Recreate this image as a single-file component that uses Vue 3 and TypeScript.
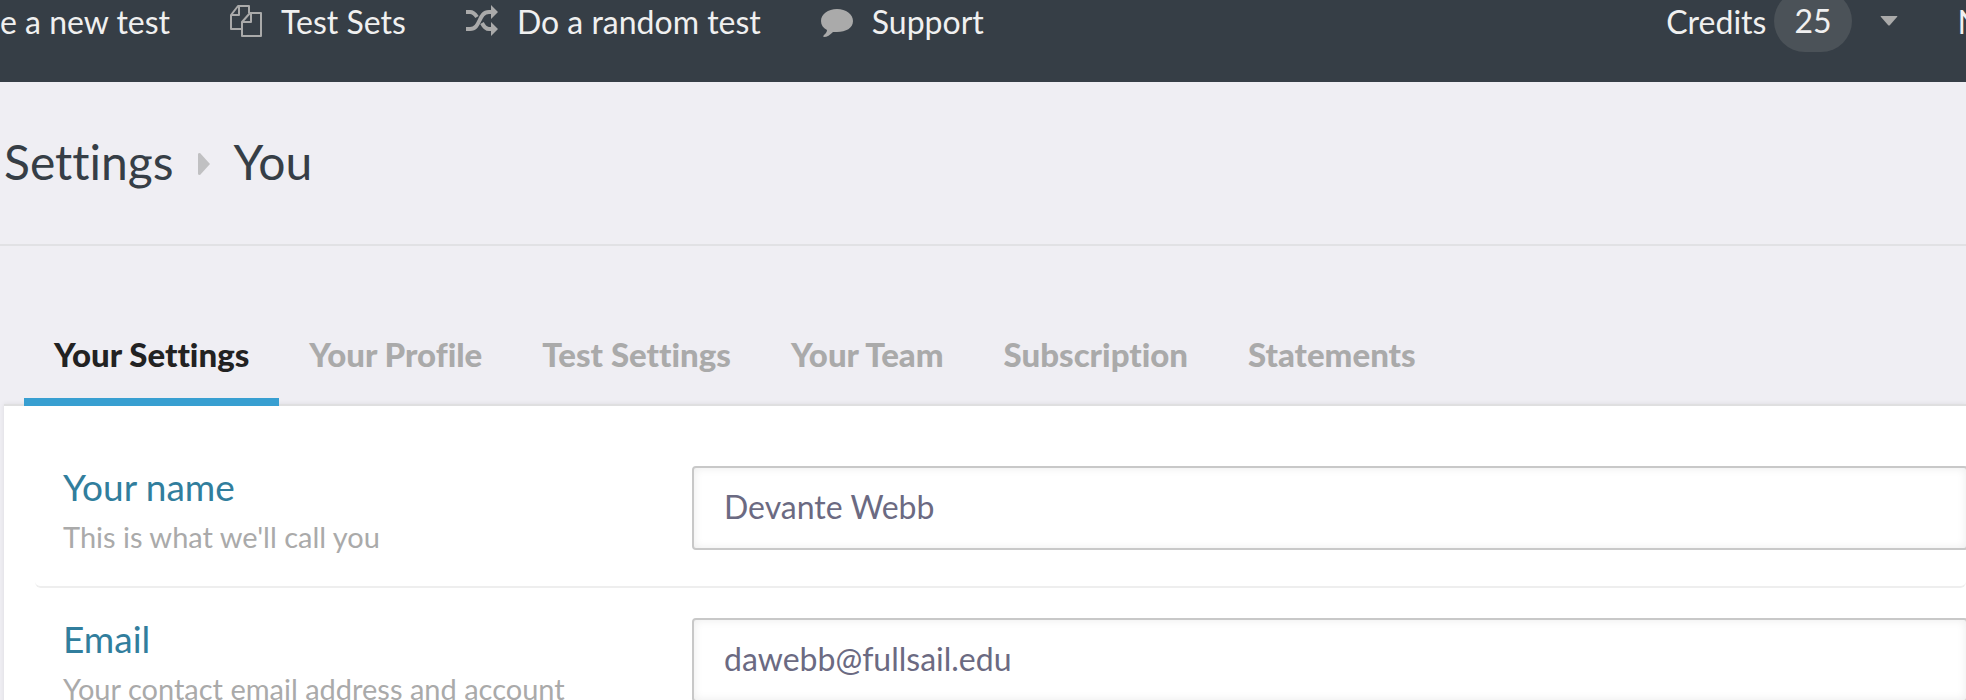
<script setup lang="ts">
import { ref } from 'vue'

interface Field {
  id: string
  type: string
  label: string
  hint: string
}

const tabs: string[] = [
  'Your Settings',
  'Your Profile',
  'Test Settings',
  'Your Team',
  'Subscription',
  'Statements',
]
const activeTab = ref(tabs[0])

const fields: Field[] = [
  { id: 'name', type: 'text', label: 'Your name', hint: "This is what we'll call you" },
  { id: 'email', type: 'email', label: 'Email', hint: 'Your contact email address and account' },
]
const values = ref<Record<string, string>>({
  name: 'Devante Webb',
  email: 'dawebb@fullsail.edu',
})
</script>

<template>
  <div class="page">
    <header class="topbar">
      <nav class="menu">
        <a href="#new">e a new test</a>
        <a href="#sets">
          <svg class="icon" viewBox="0 0 34 34" aria-hidden="true">
            <g fill="none" stroke="#aaa" stroke-width="2" stroke-linejoin="round">
              <path d="M13 25H2V11L9 2H20V9M10 2V11H2" />
              <path d="M21 9H32V32H13V18ZM22 9V18H13" />
            </g>
          </svg>
          Test Sets
        </a>
        <a href="#random">
          <svg class="icon" viewBox="0 0 34 34" aria-hidden="true">
            <g fill="none" stroke="#aaa" stroke-width="4">
              <path d="M1 25H5C16 25 13 8 24 8H27" />
              <path d="M1 8H5C8 8 10 10 12 13M17 19C19 23 21 25 24 25H27" />
            </g>
            <path fill="#aaa" d="M26 1L33 8L26 15ZM26 18L33 25L26 32Z" />
          </svg>
          Do a random test
        </a>
        <a href="#support">
          <svg class="icon" viewBox="0 0 34 34" aria-hidden="true">
            <path
              fill="#aaa"
              d="M17 5C26 5 33 10 33 17S26 28 17 28L13 28C10 31 7 33 4 33C3 33 3 32 4 31C6 29 7 28 7 26C3 24 1 21 1 17C1 10 8 5 17 5Z"
            />
          </svg>
          Support
        </a>
      </nav>
      <div class="account">
        <button type="button" class="credits">
          Credits
          <span class="pill">25</span>
          <svg class="caret" viewBox="0 0 18 10" aria-hidden="true">
            <path fill="#aaa" d="M1 0H17Q18 0 17 1L10 9Q9 10 8 9L1 1Q0 0 1 0Z" />
          </svg>
        </button>
        <a href="#account">N</a>
      </div>
    </header>

    <div class="heading">
      <h1>
        Settings
        <svg class="arrow" viewBox="0 0 12 22" aria-hidden="true">
          <path fill="#c0c0c2" d="M0 1Q0 0 2 0L12 11L2 22Q0 22 0 21Z" />
        </svg>
        You
      </h1>
    </div>

    <main>
      <nav class="tabs">
        <button
          v-for="tab in tabs"
          :key="tab"
          type="button"
          :class="{ active: tab === activeTab }"
          @click="activeTab = tab"
        >
          {{ tab }}
        </button>
      </nav>
      <form class="panel" @submit.prevent>
        <div v-for="field in fields" :key="field.id" class="row">
          <div class="caption">
            <label :for="field.id">{{ field.label }}</label>
            <p :id="field.id + '-hint'">{{ field.hint }}</p>
          </div>
          <input
            :id="field.id"
            v-model="values[field.id]"
            :type="field.type"
            :aria-describedby="field.id + '-hint'"
          />
        </div>
      </form>
    </main>
  </div>
</template>

<style>
body {
  margin: 0;
  background: #efeef3;
}
</style>

<style scoped>
.page {
  height: 100vh;
  overflow: hidden;
  background: #efeef3;
  color: #363e46;
  font-family: Lato, "Liberation Sans", sans-serif;
  font-size: 32px;
  font-variant-ligatures: none;
}
a,
button {
  color: inherit;
  font: inherit;
  font-variant-ligatures: none;
  text-decoration: none;
  white-space: nowrap;
}
button {
  border: 0;
  background: none;
  cursor: pointer;
}
.topbar {
  display: flex;
  justify-content: space-between;
  height: 82px;
  background: #363e46;
  color: #f0f0f0;
}
.menu,
.account {
  display: flex;
  height: 42px;
  align-items: center;
}
.menu {
  gap: 59px;
}
.menu a {
  display: flex;
  align-items: center;
  gap: 18px;
}
.icon {
  width: 34px;
  height: 34px;
}
.account {
  gap: 60px;
  margin-right: -16px;
}
.credits {
  display: flex;
  align-items: center;
  padding: 0;
}
.pill {
  margin: 0 28px 0 8px;
  padding: 0 20px;
  border-radius: 31px;
  background: #4b5258;
  line-height: 62px;
}
.caret {
  width: 18px;
  height: 10px;
}
.heading {
  padding: 50px 4px 52px;
  border-bottom: 2px solid #e1e1e4;
}
h1 {
  display: flex;
  align-items: center;
  gap: 24px;
  margin: 0;
  font-size: 48px;
  font-weight: 400;
  line-height: 60px;
}
.arrow {
  width: 12px;
  height: 22px;
  margin-top: 4px;
}
main {
  padding: 72px 0 0 4px;
}
.tabs {
  display: flex;
  padding-left: 20px;
}
.tabs button {
  z-index: 1;
  margin-bottom: -2px;
  padding: 16px 30px 24px;
  border-bottom: 8px solid transparent;
  color: #aaa;
  font-size: 33px;
  font-weight: 900;
  line-height: 40px;
}
.tabs .active {
  border-color: #389fd1;
  color: #222;
}
.panel {
  padding: 30px 0 0 31px;
  border-top: 2px solid #dfdfe0;
  background: #fff;
  box-shadow: 0 0 5px rgba(0, 0, 0, 0.08);
}
.row {
  display: grid;
  grid-template-columns: 628px 1fr;
  align-items: start;
  height: 84px;
  padding: 30px 0 36px 28px;
  border-bottom: 2px solid #eee;
  border-radius: 6px;
}
.row input {
  margin-left: 1px;
}
.caption {
  white-space: nowrap;
}
label {
  display: block;
  color: #317e9d;
  font-size: 37px;
  line-height: 42px;
}
p {
  margin: 12px 0 0;
  color: #aaa;
  font-size: 29px;
  line-height: 34px;
}
input {
  box-sizing: border-box;
  height: 84px;
  margin-right: -2px;
  padding: 0 30px 4px;
  border: 2px solid #c8c8c8;
  border-radius: 4px;
  background: #fff;
  box-shadow: inset 0 0 10px rgba(0, 0, 0, 0.08);
  color: #6b6a82;
  font: inherit;
}
</style>
